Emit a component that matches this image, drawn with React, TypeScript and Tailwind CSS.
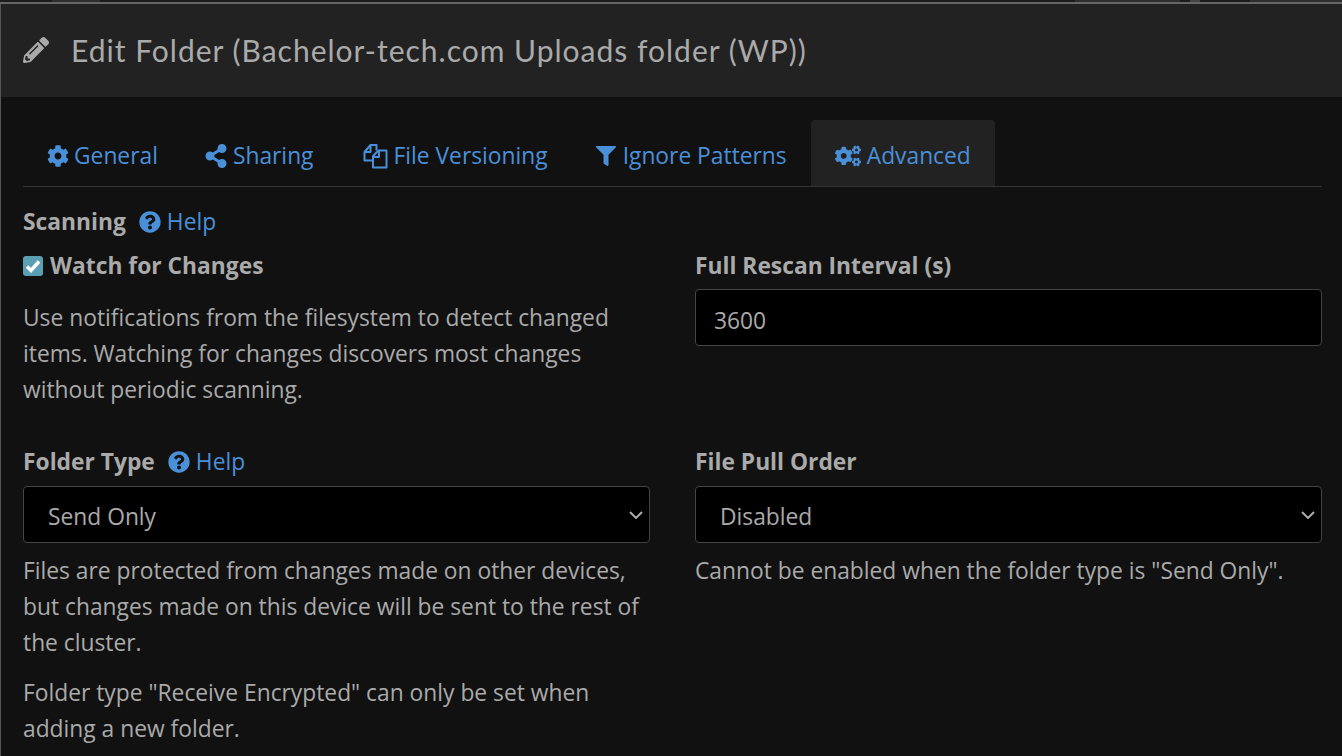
import { ReactNode } from "react";
import { FaCog, FaCogs, FaFilter, FaPencilAlt, FaQuestionCircle, FaShareAlt } from "react-icons/fa";

const bodyFont = "font-['Open_Sans','Noto_Sans',sans-serif]";

const FilesIcon = () => (
  <svg viewBox="0 0 26 26" className="h-[26px] w-[26px]" fill="none" stroke="currentColor" strokeWidth="2" strokeLinejoin="round">
    <path d="M10 17.5H2.5V9l6-7h6v5.5" />
    <path d="M8.5 2v7h-6" />
    <path d="M11 24.5V13l5.5-5.500H24.500V24.500z" />
    <path d="M17 8v6h-6" />
  </svg>
);

function Tab({ icon, label, active }: { icon: ReactNode; label: string; active?: boolean }) {
  return (
    <div className={`flex h-[66px] items-center gap-[6px] rounded-t-[4px] px-6 pt-[6px] ${active ? "bg-[#222222]" : ""}`}>
      {icon}
      <span>{label}</span>
    </div>
  );
}

function Help() {
  return (
    <span className="flex items-center gap-[6px] font-normal text-[#4a90d9]">
      <FaQuestionCircle className="text-[22px]" />
      Help
    </span>
  );
}

function SelectBox({ value }: { value: string }) {
  return (
    <div className="relative mt-[6px]">
      <select
        defaultValue={value}
        className="h-[57px] w-full appearance-none rounded-[4px] border border-[#444444] bg-black pl-6 pt-1 text-[22.8px] text-[#aaaaaa] outline-none"
      >
        <option>{value}</option>
      </select>
      <svg viewBox="0 0 14 8" className="absolute right-[7px] top-[25px] h-2 w-[14px]" fill="none" stroke="#aaaaaa" strokeWidth="2">
        <path d="M1 1l6 6 6-6" />
      </svg>
    </div>
  );
}

export default function App() {
  return (
    <div className={`h-[756px] w-[1342px] overflow-hidden bg-[#111111] text-[22.8px] leading-[36px] text-[#aaaaaa] ${bodyFont}`}>
      <div className="flex h-[2px] bg-[#1c1c1c]">
        <span className="ml-[52px] w-12 bg-[#2e2e2e]" />
        <span className="ml-[975px] w-[105px] bg-[#2e2e2e]" />
        <span className="ml-[10px] w-[10px] bg-[#444444]" />
        <span className="ml-[50px] w-[92px] bg-[#2e2e2e]" />
      </div>
      <div className="h-[2px] bg-[#666666]" />
      <div className="h-[752px] border-l border-[#555555]">
        <header className="flex h-[93px] items-center gap-[22px] bg-[#222222] pl-[22px] pb-[2px] font-['Lato',sans-serif] text-[30px] tracking-[1px]">
          <FaPencilAlt className="text-[26px]" />
          <span>Edit Folder (Bachelor-tech.com Uploads folder (WP))</span>
        </header>
        <div className="px-[22px] pr-5">
          <nav className="mt-[23px] flex border-b border-[#333333] text-[#4a90d9]">
            <Tab icon={<FaCog className="-mx-[0.5px] text-[22px]" />} label="General" />
            <Tab icon={<FaShareAlt className="-mx-[1.5px] text-[24px]" />} label="Sharing" />
            <Tab icon={<FilesIcon />} label="File Versioning" />
            <Tab icon={<FaFilter className="mr-[1px] text-[20px]" />} label="Ignore Patterns" />
            <Tab icon={<FaCogs className="text-[26px]" />} label="Advanced" active />
          </nav>

          <div className="mt-[17px] flex items-center gap-[13px] font-bold">
            Scanning <Help />
          </div>

          <div className="mt-2 grid grid-cols-2 gap-x-[45px]">
            <div>
              <div className="flex items-center gap-[7px] font-bold">
                <span className="flex h-5 w-5 items-center justify-center rounded-[3px] bg-[#5a9fb2]">
                  <svg viewBox="0 0 16 16" className="h-4 w-4" fill="none" stroke="#ffffff" strokeWidth="3.5">
                    <path d="M2 8.500l4 4 8-9" />
                  </svg>
                </span>
                Watch for Changes
              </div>
              <p className="mt-4">
                Use notifications from the filesystem to detect changed items. Watching for changes discovers most changes without periodic scanning.
              </p>
            </div>
            <div>
              <div className="font-bold">Full Rescan Interval (s)</div>
              <input
                readOnly
                value="3600"
                className="mt-[5px] h-[57px] w-full rounded-[4px] border border-[#444444] bg-black px-[18px] pt-[5px] text-[#aaaaaa] outline-none"
              />
            </div>
          </div>

          <div className="mt-9 grid grid-cols-2 gap-x-[45px]">
            <div>
              <div className="flex items-center gap-[13px] font-bold">
                Folder Type <Help />
              </div>
              <SelectBox value="Send Only" />
              <p className="mt-[10px]">
                Files are protected from changes made on other devices, but changes made on this device will be sent to the rest of the cluster.
              </p>
              <p className="mt-[14px]">Folder type "Receive Encrypted" can only be set when adding a new folder.</p>
            </div>
            <div>
              <div className="font-bold">File Pull Order</div>
              <SelectBox value="Disabled" />
              <p className="mt-[10px]">Cannot be enabled when the folder type is "Send Only".</p>
            </div>
          </div>
        </div>
      </div>
    </div>
  );
}
